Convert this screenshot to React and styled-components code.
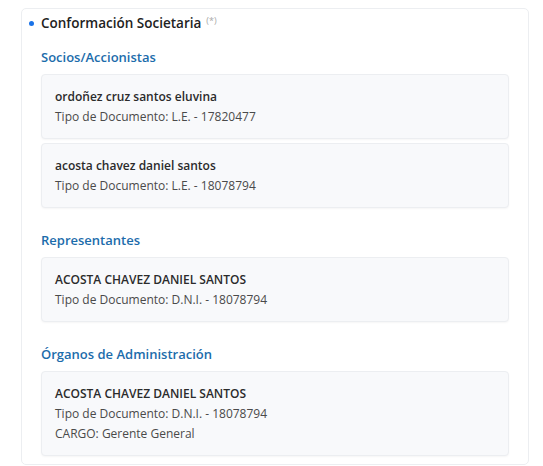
import styled, { createGlobalStyle } from "styled-components";

const GlobalStyle = createGlobalStyle`
  body {
    margin: 0;
    background: #ffffff;
    font-family: "Open Sans", "Liberation Sans", sans-serif;
  }
`;

const data = [
  {
    title: "Socios/Accionistas",
    people: [
      { name: "ordoñez cruz santos eluvina", doc: "Tipo de Documento: L.E. - 17820477" },
      { name: "acosta chavez daniel santos", doc: "Tipo de Documento: L.E. - 18078794" },
    ],
  },
  {
    title: "Representantes",
    people: [
      { name: "ACOSTA CHAVEZ DANIEL SANTOS", doc: "Tipo de Documento: D.N.I. - 18078794" },
    ],
  },
  {
    title: "Órganos de Administración",
    people: [
      {
        name: "ACOSTA CHAVEZ DANIEL SANTOS",
        doc: "Tipo de Documento: D.N.I. - 18078794",
        cargo: "CARGO: Gerente General",
      },
    ],
  },
];

function App() {
  return (
    <>
      <GlobalStyle />
      <Panel>
        <Title>
          <Dot />
          Conformación Societaria
          <Required>(*)</Required>
        </Title>
        {data.map((section, i) => (
          <Section key={section.title}>
            <SectionTitle first={i === 0}>{section.title}</SectionTitle>
            <CardList>
              {section.people.map((p) => (
                <Card key={p.name + p.doc}>
                  <Name>{p.name}</Name>
                  <Line>{p.doc}</Line>
                  {p.cargo && <Line>{p.cargo}</Line>}
                </Card>
              ))}
            </CardList>
          </Section>
        ))}
      </Panel>
    </>
  );
}

const Panel = styled.div`
  margin: 8px 14px 0 21px;
  padding: 4px 19px 8px 19px;
  border: 1px solid #eceef1;
  border-radius: 5px;
  background: #fff;
  box-sizing: border-box;
  height: 457px;
`;

const Title = styled.div`
  display: flex;
  align-items: center;
  height: 20px;
  font-size: 13.5px;
  font-weight: 600;
  color: #222;
`;

const Dot = styled.span`
  width: 5px;
  height: 5px;
  border-radius: 50%;
  background: #1a73e8;
  margin-left: -12px;
  margin-right: 7px;
`;

const Required = styled.span`
  font-size: 9px;
  font-weight: 400;
  color: #a8a8a8;
  margin-left: 5px;
  align-self: flex-start;
  margin-top: 1px;
`;

const Section = styled.div``;

const SectionTitle = styled.div`
  margin: ${(p) => (p.first ? "14px" : "22px")} 0 7px;
  line-height: 20px;
  font-size: 13px;
  font-weight: 600;
  color: #1c6cab;
`;

const CardList = styled.div`
  display: flex;
  flex-direction: column;
  gap: 4px;
`;

const Card = styled.div`
  padding: 12px 13px 11px;
  background: #f8f9fb;
  border: 1px solid #eceef1;
  border-radius: 4px;
  box-shadow: 0 1px 2px rgba(0, 0, 0, 0.04);
  box-sizing: border-box;
`;

const Name = styled.div`
  line-height: 20px;
  font-size: 12px;
  font-weight: 600;
  color: #2b2b2b;
`;

const Line = styled.div`
  line-height: 20px;
  font-size: 12px;
  color: #4a4a4a;
`;

export default App;
